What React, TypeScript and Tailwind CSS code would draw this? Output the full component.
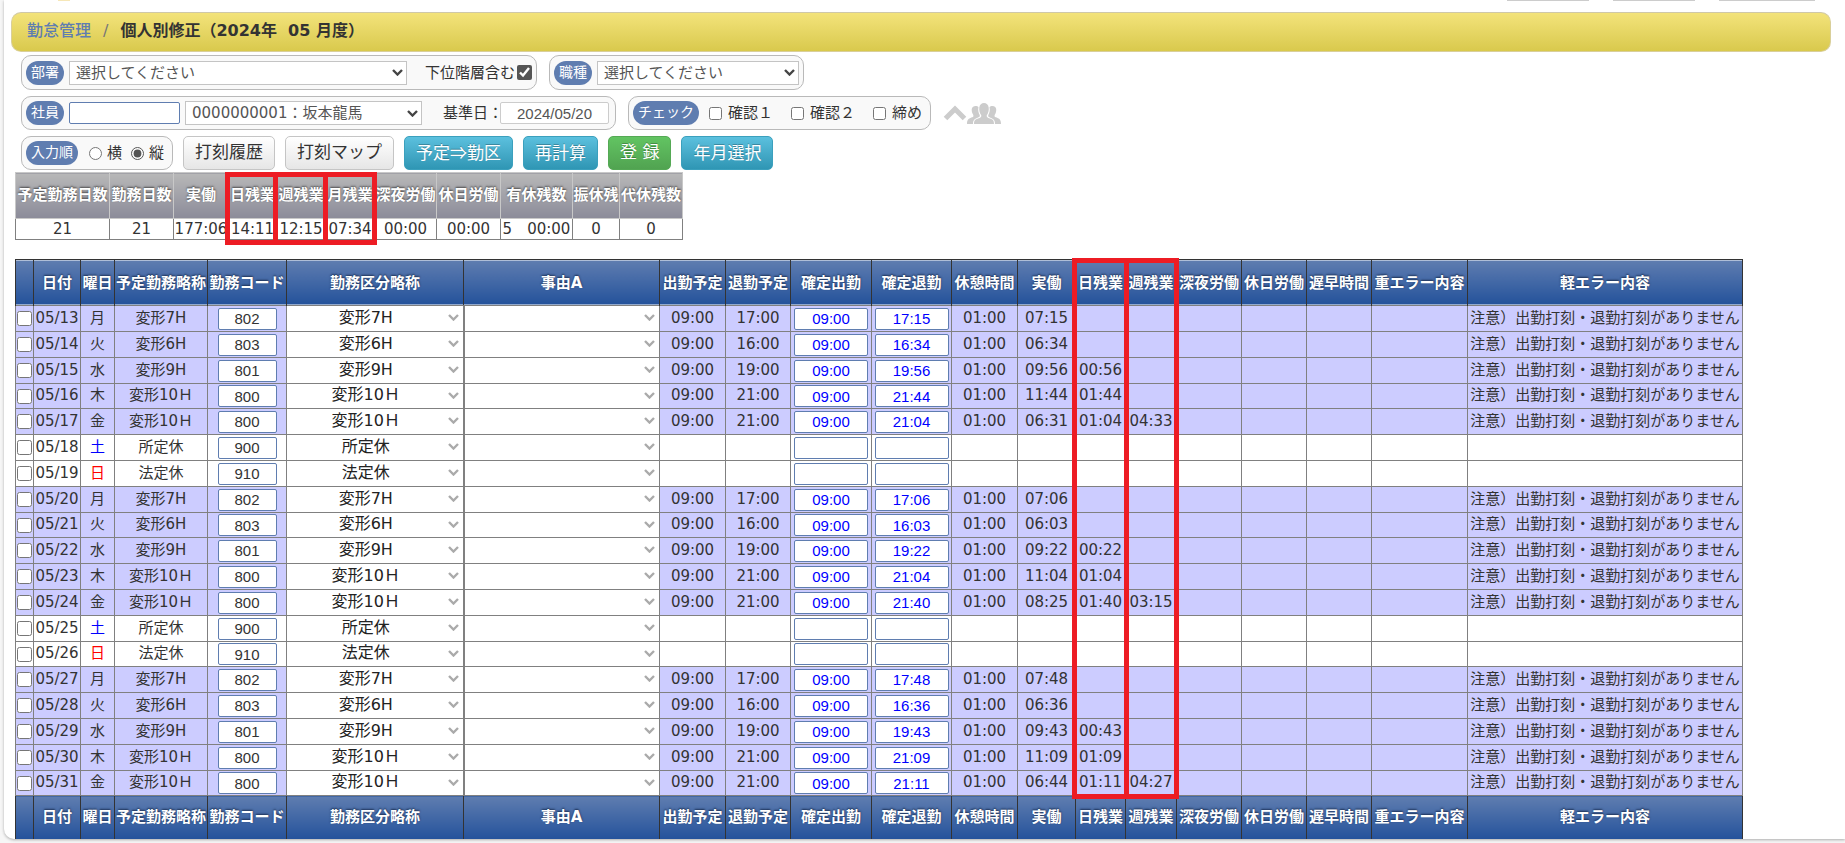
import type { ReactNode } from "react";

type Day = {
  date: string;
  dow: string;
  code: string;
  start?: string;
  end?: string;
  inAt?: string;
  outAt?: string;
  rest?: string;
  worked?: string;
  daily?: string;
  weekly?: string;
};

const SHIFT: Record<string, string> = {
  "802": "変形7H",
  "803": "変形6H",
  "801": "変形9H",
  "800": "変形10Ｈ",
  "900": "所定休",
  "910": "法定休",
};

const work = (
  date: string,
  dow: string,
  code: string,
  end: string,
  outAt: string,
  worked: string,
  daily = "",
  weekly = "",
): Day => ({ date, dow, code, start: "09:00", end, inAt: "09:00", outAt, rest: "01:00", worked, daily, weekly });

const DAYS: Day[] = [
  work("05/13", "月", "802", "17:00", "17:15", "07:15"),
  work("05/14", "火", "803", "16:00", "16:34", "06:34"),
  work("05/15", "水", "801", "19:00", "19:56", "09:56", "00:56"),
  work("05/16", "木", "800", "21:00", "21:44", "11:44", "01:44"),
  work("05/17", "金", "800", "21:00", "21:04", "06:31", "01:04", "04:33"),
  { date: "05/18", dow: "土", code: "900" },
  { date: "05/19", dow: "日", code: "910" },
  work("05/20", "月", "802", "17:00", "17:06", "07:06"),
  work("05/21", "火", "803", "16:00", "16:03", "06:03"),
  work("05/22", "水", "801", "19:00", "19:22", "09:22", "00:22"),
  work("05/23", "木", "800", "21:00", "21:04", "11:04", "01:04"),
  work("05/24", "金", "800", "21:00", "21:40", "08:25", "01:40", "03:15"),
  { date: "05/25", dow: "土", code: "900" },
  { date: "05/26", dow: "日", code: "910" },
  work("05/27", "月", "802", "17:00", "17:48", "07:48"),
  work("05/28", "火", "803", "16:00", "16:36", "06:36"),
  work("05/29", "水", "801", "19:00", "19:43", "09:43", "00:43"),
  work("05/30", "木", "800", "21:00", "21:09", "11:09", "01:09"),
  work("05/31", "金", "800", "21:00", "21:11", "06:44", "01:11", "04:27"),
];

const COLUMNS: [string, string][] = [
  ["", "w-[18px]"],
  ["日付", "w-[47px]"],
  ["曜日", "w-[34px]"],
  ["予定勤務略称", "w-[93px]"],
  ["勤務コード", "w-[79px]"],
  ["勤務区分略称", "w-[177px]"],
  ["事由A", "w-[196px]"],
  ["出勤予定", "w-[66px]"],
  ["退勤予定", "w-[65px]"],
  ["確定出勤", "w-[81px]"],
  ["確定退勤", "w-[80px]"],
  ["休憩時間", "w-[66px]"],
  ["実働", "w-[58px]"],
  ["日残業", "w-[50px]"],
  ["週残業", "w-[51px]"],
  ["深夜労働", "w-[65px]"],
  ["休日労働", "w-[65px]"],
  ["遅早時間", "w-[65px]"],
  ["重エラー内容", "w-[96px]"],
  ["軽エラー内容", "w-[275px]"],
];

const SUMMARY: [string, string, string][] = [
  ["予定勤務日数", "21", "w-[94px]"],
  ["勤務日数", "21", "w-[64px]"],
  ["実働", "177:06", "w-[55px]"],
  ["日残業", "14:11", "w-[48px]"],
  ["週残業", "12:15", "w-[49px]"],
  ["月残業", "07:34", "w-[49px]"],
  ["深夜労働", "00:00", "w-[62px]"],
  ["休日労働", "00:00", "w-[64px]"],
  ["有休残数", "5　00:00", "w-[72px]"],
  ["振休残", "0", "w-[47px]"],
  ["代休残数", "0", "w-[63px]"],
];

function Chevron({ className }: { className: string }) {
  return (
    <svg viewBox="0 0 11 7" className={`pointer-events-none absolute h-[7px] w-[11px] ${className}`} aria-hidden="true">
      <path d="M1 1l4.5 4.5L10 1" fill="none" stroke="currentColor" strokeWidth="2.4" />
    </svg>
  );
}

function Group({ children, className = "" }: { children: ReactNode; className?: string }) {
  return (
    <div className={`flex items-center rounded-[10px] border border-[#b9b9b9] bg-[#f9f9f9] px-1 ${className}`}>
      {children}
    </div>
  );
}

function Pill({ children, htmlFor }: { children: ReactNode; htmlFor?: string }) {
  const cls = "h-6 shrink-0 rounded-full bg-[#5f7db0] px-[5px] text-[14px] leading-[22px] text-white";
  return htmlFor ? (
    <label htmlFor={htmlFor} className={cls}>{children}</label>
  ) : (
    <span className={cls}>{children}</span>
  );
}

function FilterSelect({ id, value, width }: { id: string; value: string; width: string }) {
  return (
    <span className={`relative flex items-center ${width}`}>
      <select id={id} className="h-6 w-full appearance-none border border-[#c4c4c4] bg-white pr-6 pl-1.5 text-[15px] leading-5 text-[#555]">
        <option>{value}</option>
      </select>
      <Chevron className="right-1 text-[#444]" />
    </span>
  );
}

function RowSelect({ label, value }: { label: string; value: string }) {
  return (
    <span className="relative flex items-center">
      <select
        aria-label={label}
        className="h-[22px] w-full appearance-none bg-white pr-[18px] text-center text-[16px] leading-5 text-[#222] [text-align-last:center]"
      >
        <option>{value}</option>
      </select>
      <Chevron className="right-1 text-[#aaa]" />
    </span>
  );
}

const BUTTON = "h-[34px] rounded-[5px] border px-[11px] pb-0.5 text-[17px] leading-6 whitespace-pre";
const BUTTON_LIGHT = `${BUTTON} border-[#c5c5c5] bg-linear-to-b from-white to-[#e6e6e6] text-[#333]`;
const BUTTON_BLUE = `${BUTTON} border-[#3ba0bd] bg-linear-to-b from-[#5bc0de] to-[#2f96b4] font-['Noto_Sans_CJK_JP',sans-serif] text-white [text-shadow:0_-1px_0_rgba(0,0,0,0.25)]`;
const BUTTON_GREEN = `${BUTTON} border-[#55a955] bg-linear-to-b from-[#62c462] to-[#51a351] text-white [text-shadow:0_-1px_0_rgba(0,0,0,0.25)]`;

const BOX = "m-0 size-[13px] shrink-0 accent-[#555]";

function HeadCells({ part }: { part: "head" | "foot" }) {
  const fill =
    part === "head"
      ? "bg-[linear-gradient(to_bottom,#5f7db0,#24529b_calc(100%-1px),#fff_calc(100%-1px))]"
      : "bg-[linear-gradient(to_bottom,#5f7db0,#24529b)]";
  return (
    <>
      {COLUMNS.map(([name], i) => (
        <th
          key={i}
          scope="col"
          className={`border-x border-t border-x-[#333] border-t-[#333] p-0 font-bold whitespace-nowrap text-white [text-shadow:0_-1px_2px_#1c2f52] ${fill}`}
        >
          {name}
        </th>
      ))}
    </>
  );
}

function TimeInput({ label, value }: { label: string; value?: string }) {
  return (
    <input
      aria-label={label}
      defaultValue={value ?? ""}
      className="mx-auto block h-[22px] w-[74px] rounded-[2px] border border-[#5f7db0] bg-white text-center font-['Liberation_Sans',sans-serif] text-[15px] text-[#00f]"
    />
  );
}

function DayRow({ day, tall }: { day: Day; tall: boolean }) {
  const working = Boolean(day.start);
  const dow = day.dow === "土" ? "text-[#00f]" : day.dow === "日" ? "text-[#f00]" : "";
  const cells = [day.daily, day.weekly, "", "", "", ""];
  return (
    <tr className={`${tall ? "h-[26px]" : "h-[25px]"} ${working ? "bg-[#ccccff]" : "bg-white"} [&>td]:border [&>td]:border-[#808080] [&>td]:p-0 [&>td]:pb-0.5 [&>td:has(input)]:pb-0`}>
      <td>
        <input type="checkbox" aria-label={day.date} className="mx-auto block size-[15px]" />
      </td>
      <td>{day.date}</td>
      <td className={dow}>{day.dow}</td>
      <td>{SHIFT[day.code]}</td>
      <td>
        <input
          aria-label={`${day.date} 勤務コード`}
          defaultValue={day.code}
          className="mx-auto block h-[22px] w-[59px] rounded-[2px] border border-[#5f7db0] bg-white text-center font-['Liberation_Sans',sans-serif] text-[15px] text-[#333]"
        />
      </td>
      <td className="bg-white">
        <RowSelect label={`${day.date} 勤務区分略称`} value={SHIFT[day.code]} />
      </td>
      <td className="border-l-2! bg-white">
        <RowSelect label={`${day.date} 事由A`} value="" />
      </td>
      <td>{day.start}</td>
      <td>{day.end}</td>
      <td><TimeInput label={`${day.date} 確定出勤`} value={day.inAt} /></td>
      <td><TimeInput label={`${day.date} 確定退勤`} value={day.outAt} /></td>
      <td>{day.rest}</td>
      <td>{day.worked}</td>
      {cells.map((text, i) => (
        <td key={i}>{text}</td>
      ))}
      <td>{working ? "注意）出勤打刻・退勤打刻がありません" : ""}</td>
    </tr>
  );
}

function Check({ label }: { label: string }) {
  return (
    <label className="flex items-center gap-1.5">
      <input type="checkbox" className={BOX} />
      {label}
    </label>
  );
}

export default function App() {
  return (
    <div className="min-h-screen overflow-hidden bg-[#f6f6f6] pb-[5px] pl-1 font-['DejaVu_Sans','Noto_Sans_CJK_JP',sans-serif] text-[15px] leading-5 text-[#333]">
      <div className="rounded-bl-[10px] bg-white shadow-[0_1px_3px_rgba(0,0,0,0.3)]">
        <div className="flex h-3 items-start gap-6 pr-[30px] pl-[54px]">
          <span className="mr-auto h-px w-3 bg-[#f6e7b8]" />
          <span className="h-px w-[82px] bg-[#ccc]" />
          <span className="h-px w-[82px] bg-[#ccc]" />
          <span className="h-px w-[96px] bg-[#ccc]" />
        </div>

        <header className="mr-3.5 ml-[7px] flex h-10 items-center rounded-[10px] border border-[#d9cf9a] border-t-[#cfc8a8] bg-linear-to-b from-[#f3e37a] to-[#d9c94c] px-[15px] pb-0.5 text-[16px] leading-6 font-bold">
          <nav className="flex items-center whitespace-pre">
            <a href="#attendance" className="font-medium text-[#5f7db0]">勤怠管理</a>
            <span className="px-3 font-normal text-[#777]">/</span>
            <h1>個人別修正（2024年  05 月度）</h1>
          </nav>
        </header>

        <form className="flex flex-col pl-[17px]" onSubmit={(e) => e.preventDefault()}>
          <div className="mt-[3px] flex gap-3">
            <Group className="h-[35px] gap-[5px]">
              <Pill htmlFor="dept">部署</Pill>
              <FilterSelect id="dept" value="選択してください" width="w-[338px]" />
              <label className="flex items-center gap-0.5 pl-[13px]">
                下位階層含む
                <input type="checkbox" defaultChecked className="m-0 size-[15px] accent-[#555]" />
              </label>
            </Group>
            <Group className="h-[35px] gap-[5px]">
              <Pill htmlFor="job">職種</Pill>
              <FilterSelect id="job" value="選択してください" width="w-[202px]" />
            </Group>
          </div>

          <div className="mt-1.5 flex items-center gap-3">
            <Group className="h-[34px] gap-[5px]">
              <Pill htmlFor="emp">社員</Pill>
              <input id="emp" className="h-[22px] w-[111px] rounded-[2px] border border-[#5f7db0] bg-white px-1" />
              <FilterSelect id="emp-list" value="0000000001：坂本龍馬" width="w-[237px]" />
              <label htmlFor="base" className="-mr-2 pl-4">基準日：</label>
              <input
                id="base"
                defaultValue="2024/05/20"
                className="mr-0.5 h-[22px] w-[109px] rounded-[2px] border border-[#ccc] bg-white text-center font-['Liberation_Sans',sans-serif] text-[#555]"
              />
            </Group>
            <Group className="h-[34px] gap-[10px]">
              <Pill>チェック</Pill>
              <span className="flex gap-[18px] pr-1">
                <Check label="確認１" />
                <Check label="確認２" />
                <Check label="締め" />
              </span>
            </Group>
            <button type="button" aria-label="社員一覧" className="flex items-center text-[#ccc]">
              <svg viewBox="0 0 24 16" className="h-4 w-6" aria-hidden="true">
                <path d="M2.5 13.5L12 4l9.5 9.5" fill="none" stroke="currentColor" strokeWidth="5" />
              </svg>
              <svg viewBox="0 0 34 21" className="h-[21px] w-[34px]" fill="currentColor" aria-hidden="true">
                <path d="M0 21c0-4 1-5.500 6-7 .8-.8.500-2-.5-3.500C4 7 4.500 3 8.500 3c1.500 0 2.500.5 3 1.200-.8 2.800 0 5.300 1.200 7.800.5 1.500-.2 2-2.700 3-3 1.200-4 2.500-4 6z" />
                <path d="M34 21c0-4-1-5.500-6-7-.8-.8-.5-2 .5-3.500C30 7 29.500 3 25.500 3c-1.500 0-2.500.5-3 1.200.8 2.800 0 5.300-1.200 7.800-.5 1.500.2 2 2.700 3 3 1.200 4 2.500 4 6z" />
                <path d="M7 21c0-3.500 1-4.500 4-5.500 2.500-.8 3.500-1.500 3.300-3C12.500 10 12 7 12.300 4.500 12.700 1.500 14.500 0 17 0s4.300 1.500 4.700 4.500c.3 2.500-.2 5.500-2 8-.2 1.500.8 2.200 3.300 3 3 1 4 2 4 5.500z" />
              </svg>
            </button>
          </div>

          <div className="mt-1.5 flex items-center gap-[10px]">
            <Group className="h-[34px] gap-[11px]">
              <Pill>入力順</Pill>
              <span className="flex gap-[9px] pr-1">
                <label className="flex items-center gap-[5px]">
                  <input type="radio" name="order" className={BOX} />横
                </label>
                <label className="flex items-center gap-[5px]">
                  <input type="radio" name="order" defaultChecked className={BOX} />縦
                </label>
              </span>
            </Group>
            <button type="button" className={BUTTON_LIGHT}>打刻履歴</button>
            <button type="button" className={BUTTON_LIGHT}>打刻マップ</button>
            <button type="button" className={BUTTON_BLUE}>予定⇒勤区</button>
            <button type="button" className={BUTTON_BLUE}>再計算</button>
            <button type="submit" className={BUTTON_GREEN}>登 録</button>
            <button type="button" className={BUTTON_BLUE}>年月選択</button>
          </div>
        </form>

        <div className="relative mt-0.5 ml-[11px] w-fit">
          <table className="w-[668px] table-fixed border-collapse text-center">
            <colgroup>
              {SUMMARY.map(([name, , width]) => (
                <col key={name} className={width} />
              ))}
            </colgroup>
            <thead>
              <tr className="h-[46px]">
                {SUMMARY.map(([name]) => (
                  <th key={name} scope="col" className="border border-[#c8c8c8] bg-linear-to-b from-[#b8b8b8] to-[#8b8b99] p-0 pb-0.5 font-bold whitespace-nowrap text-white [text-shadow:0_-1px_2px_#444]">
                    {name}
                  </th>
                ))}
              </tr>
            </thead>
            <tbody>
              <tr className="h-[21px]">
                {SUMMARY.map(([name, value]) => (
                  <td key={name} className="border border-[#808080] p-0 leading-[18px] whitespace-nowrap">{value}</td>
                ))}
              </tr>
            </tbody>
          </table>
          <div className="pointer-events-none absolute top-0 left-[210px] h-[73px] w-[53px] border-5 border-[#ed1c24]" />
          <div className="pointer-events-none absolute top-0 left-[258px] h-[73px] w-[55px] border-5 border-[#ed1c24]" />
          <div className="pointer-events-none absolute top-0 left-[308px] h-[73px] w-[54px] border-5 border-[#ed1c24]" />
        </div>

        <div className="relative mt-[19px] ml-[11px] w-fit">
          <table className="w-[1728px] table-fixed border-collapse text-center whitespace-nowrap">
            <colgroup>
              {COLUMNS.map(([name, width]) => (
                <col key={name} className={width} />
              ))}
            </colgroup>
            <thead>
              <tr className="h-[46px]">
                <HeadCells part="head" />
              </tr>
            </thead>
            <tbody>
              {DAYS.map((day, i) => (
                <DayRow key={day.date} day={day} tall={i % 5 !== 3} />
              ))}
            </tbody>
            <tfoot>
              <tr className="h-[43px]">
                <HeadCells part="foot" />
              </tr>
            </tfoot>
          </table>
          <div className="pointer-events-none absolute -top-px left-[1057px] h-[541px] w-[57px] border-5 border-[#ed1c24]" />
          <div className="pointer-events-none absolute -top-px left-[1109px] h-[541px] w-[55px] border-5 border-[#ed1c24]" />
        </div>
      </div>
    </div>
  );
}
